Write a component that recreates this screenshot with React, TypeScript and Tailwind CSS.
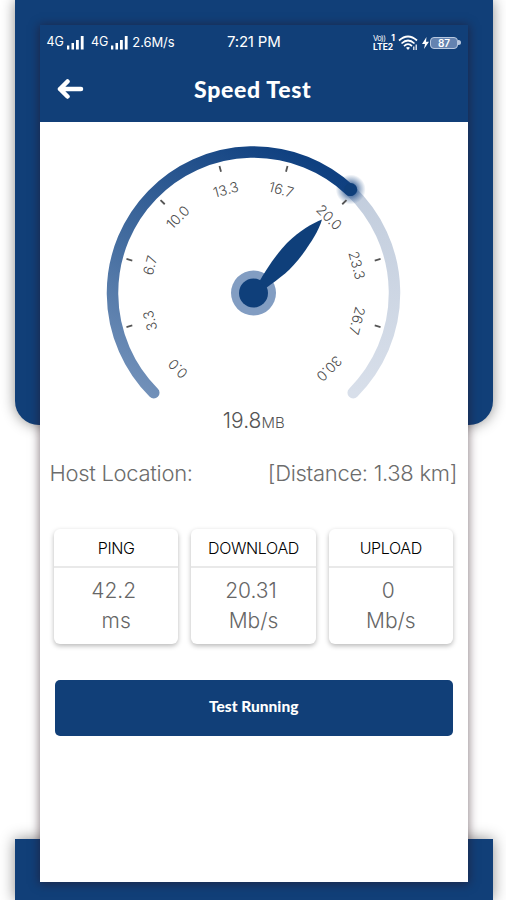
const LABELS = [
  "0.0",
  "3.3",
  "6.7",
  "10.0",
  "13.3",
  "16.7",
  "20.0",
  "23.3",
  "26.7",
  "30.0",
];

const CX = 153.5;
const CY = 153;
const RADIUS = 141;

const point = (angle: number, r: number) => {
  const rad = (angle * Math.PI) / 180;
  return { x: CX + r * Math.cos(rad), y: CY + r * Math.sin(rad) };
};

const arc = (from: number, to: number) => {
  const a = point(from, RADIUS);
  const b = point(to, RADIUS);
  const large = to - from > 180 ? 1 : 0;
  return `M${a.x} ${a.y} A${RADIUS} ${RADIUS} 0 ${large} 1 ${b.x} ${b.y}`;
};

function Gauge({ value }: { value: number }) {
  const end = 135 + (value / 30) * 270;
  const knob = point(end, 142);

  return (
    <svg width="307" height="268" viewBox="0 0 307 268" className="block">
      <defs>
        <linearGradient
          id="progress"
          gradientUnits="userSpaceOnUse"
          x1="45"
          y1="262"
          x2="190"
          y2="10"
        >
          <stop offset="0" stopColor="#7593bb" />
          <stop offset="0.45" stopColor="#436c9f" />
          <stop offset="1" stopColor="#0f4080" />
        </linearGradient>
        <linearGradient id="track" x1="0" y1="0" x2="0" y2="1">
          <stop offset="0" stopColor="#c2cddd" />
          <stop offset="1" stopColor="#d8dfea" />
        </linearGradient>
        <radialGradient id="glow">
          <stop offset="0.35" stopColor="#0f4080" stopOpacity="0.7" />
          <stop offset="0.7" stopColor="#0f4080" stopOpacity="0.3" />
          <stop offset="1" stopColor="#0f4080" stopOpacity="0" />
        </radialGradient>
      </defs>

      <path
        d={arc(end, 405)}
        fill="none"
        stroke="url(#track)"
        strokeWidth="11.5"
        strokeLinecap="round"
      />
      <path
        d={arc(135, end)}
        fill="none"
        stroke="url(#progress)"
        strokeWidth="11.5"
        strokeLinecap="round"
      />
      <circle cx={knob.x} cy={knob.y} r="15" fill="url(#glow)" />
      <circle cx={knob.x} cy={knob.y} r="6.5" fill="#0f3f7a" />

      {LABELS.map((label, i) => {
        const angle = 135 + i * 30;
        const p = point(angle, 107);
        const t1 = point(angle, 125.5);
        const t2 = point(angle, 131.5);
        return (
          <g key={label}>
            {i > 0 && i < LABELS.length - 1 && (
              <line
                x1={t1.x}
                y1={t1.y}
                x2={t2.x}
                y2={t2.y}
                stroke="#555"
                strokeWidth="1.8"
              />
            )}
            <text
              transform={`translate(${p.x} ${p.y}) rotate(${angle + 90})`}
              textAnchor="middle"
              dy="5"
              className="fill-[#4c4c4c] font-['Inter'] text-[14px] font-light"
            >
              {label}
            </text>
          </g>
        );
      })}

      <circle cx={CX} cy={CY} r="22.5" fill="#829dc2" />
      <circle cx={CX} cy={CY} r="14.5" fill="#0f3f7a" />
      <path
        d="M222 79.500 C213 83 199 91 187 103 C174 117 166 130 159 142 L166 148 C180 138 191 130 202 115 C212 101 219 90 222 79.500 Z"
        fill="#0f3f7a"
      />
    </svg>
  );
}

function Signal() {
  return (
    <svg width="19" height="14" viewBox="0 0 19 14" className="fill-white">
      <rect x="1" y="9.500" width="2.300" height="4" />
      <rect x="5.500" y="7" width="2.500" height="6.500" />
      <rect x="10" y="4" width="2.800" height="9.500" />
      <rect x="14.800" y="0" width="2.800" height="13.500" />
    </svg>
  );
}

function StatusBar() {
  return (
    <div className="grid h-[35px] grid-cols-[1fr_auto_1fr] items-center pr-[7px] pl-[7px] text-white">
      <div className="flex items-center">
        <span className="text-[12.5px]">4G</span>
        <span className="ml-[2px]">
          <Signal />
        </span>
        <span className="ml-[6px] text-[12.5px]">4G</span>
        <span className="ml-[2px]">
          <Signal />
        </span>
        <span className="ml-[3px] text-[13px] tracking-[-0.1px]">2.6M/s</span>
      </div>
      <span className="text-[15px] tracking-[-0.2px]">7:21 PM</span>
      <div className="flex items-center justify-end">
        <div className="flex w-[22px] flex-col gap-px text-[8.5px] leading-[8px] font-bold">
          <div className="flex h-[8px] items-center justify-between">
            <span className="text-[7.5px] leading-[7px] font-normal tracking-[-0.6px]">
              Vo))
            </span>
            <span className="leading-[7px]">1</span>
          </div>
          <div className="h-[8px] leading-[8px]">LTE2</div>
        </div>
        <svg
          width="20"
          height="16"
          viewBox="0 0 20 16"
          className="ml-[3px] fill-none stroke-white"
          strokeWidth="1.7"
        >
          <path d="M1 5.500 Q10 -2.500 19 5.500" />
          <path d="M3.500 8.500 Q10 2.500 16.500 8.500" />
          <path d="M6 11.200 Q10 7.200 14 11.200" />
          <path d="M8 12.800 Q10 11 12 12.800 L10 15Z" fill="white" stroke="none" />
          <path d="M18.200 9.500 V15 M15.800 11.500 V15" strokeWidth="1.200" />
        </svg>
        <svg
          width="7"
          height="12"
          viewBox="0 0 7 12"
          className="ml-[4px] fill-white"
        >
          <path d="M4.500 0 L0 7 H3 L2 12 L7 4.800 H4 Z" />
        </svg>
        <div className="ml-[1px] flex h-[12px] w-[28px] items-center justify-center rounded-[4px] border border-[#b8c8df] bg-[#6483b0] text-[10px] leading-none font-semibold">
          87
        </div>
        <div className="h-[5px] w-[3px] rounded-r-full bg-[#b8c8df]" />
      </div>
    </div>
  );
}

function StatCard({
  title,
  value,
  unit,
}: {
  title: string;
  value: string;
  unit: string;
}) {
  return (
    <div className="h-[115px] flex-1 rounded-[6px] bg-white text-center shadow-[0_2px_5px_rgba(0,0,0,0.28)]">
      <div className="h-[39px] border-b-2 border-[#e9e9e9] text-[16px] leading-[38px] font-light tracking-[-0.35px] text-black">
        {title}
      </div>
      <div className="pt-[8px] text-[21px] leading-[30px] font-light text-[#666]">
        <p className="pr-[5px]">{value}</p>
        <p>{unit}</p>
      </div>
    </div>
  );
}

export default function App() {
  return (
    <div className="grid h-[900px] w-[506px] overflow-hidden bg-white font-['Inter',sans-serif]">
      <div className="col-start-1 row-start-1 flex flex-col justify-between pr-[13px] pl-[14.5px]">
        <div className="h-[425px] rounded-b-[24px] bg-[#113f78] shadow-[0_0_14px_rgba(0,0,0,0.45)]" />
        <div className="h-[61px] bg-[#113f78] shadow-[0_0_14px_rgba(0,0,0,0.45)]" />
      </div>

      <div className="z-10 col-start-1 row-start-1 mt-[25px] mr-[38px] ml-[39.5px] flex h-[857px] flex-col bg-white shadow-[0_1px_9px_1px_rgba(40,15,25,0.5)]">
        <header className="h-[97px] bg-[#113f78]">
          <StatusBar />
          <div className="flex h-[58px] items-center pl-[17px] text-white">
            <svg
              width="27"
              height="22"
              viewBox="0 0 27 22"
              className="fill-none stroke-white"
              strokeWidth="4.500"
              strokeLinecap="round"
              strokeLinejoin="round"
            >
              <path d="M24 11 H3 M10.500 3.500 L3 11 L10.500 18.500" />
            </svg>
            <h1 className="flex-1 pr-[46px] text-center font-['Lato'] text-[23px] font-black tracking-[0.7px]">
              Speed Test
            </h1>
          </div>
        </header>

        <main className="flex flex-1 flex-col">
          <div className="mt-[18px] ml-[60.5px]">
            <Gauge value={19.8} />
          </div>
          <p className="mt-[-1px] text-center text-[21px] leading-[28px] font-light text-[#555]">
            19.8<span className="text-[15px]">MB</span>
          </p>

          <div className="mt-[21px] flex justify-between pr-[11px] pl-[10px] text-[22px] leading-[30px] font-light tracking-[-0.3px] text-[#6c6c6c]">
            <span>Host Location:</span>
            <span>[Distance: 1.38 km]</span>
          </div>

          <div className="mt-[41px] flex gap-[13px] pr-[15px] pl-[14.5px]">
            <StatCard title="PING" value="42.2" unit="ms" />
            <StatCard title="DOWNLOAD" value="20.31" unit="Mb/s" />
            <StatCard title="UPLOAD" value="0" unit="Mb/s" />
          </div>

          <button className="mx-[15px] mt-[36px] h-[56px] rounded-[5px] bg-[#113f78] pb-[3px] font-['Lato'] text-[15.5px] font-black text-white">
            Test Running
          </button>
        </main>
      </div>
    </div>
  );
}
